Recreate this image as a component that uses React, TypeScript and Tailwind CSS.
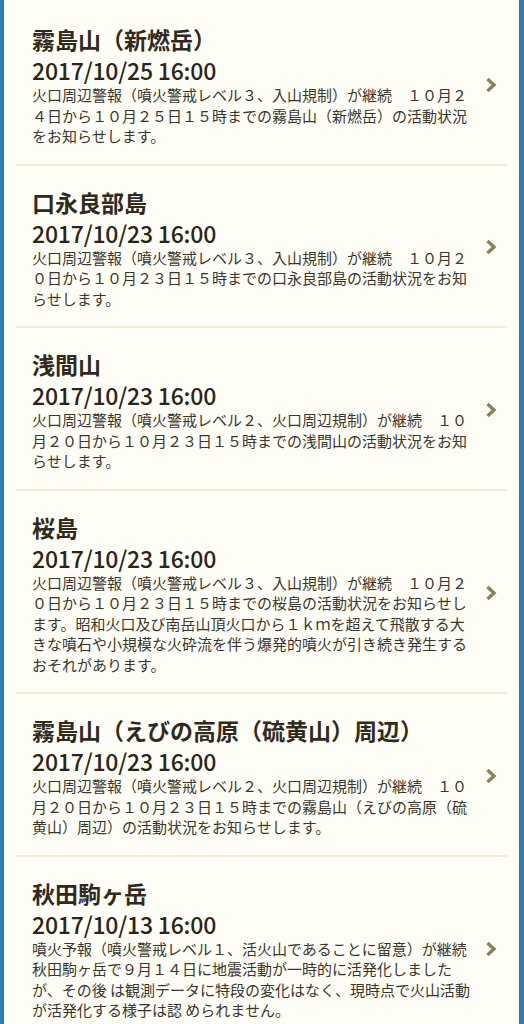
import React from "react";

type Item = { title: string; date: string; body: string };

const items: Item[] = [
  {
    title: "霧島山（新燃岳）",
    date: "2017/10/25 16:00",
    body: "火口周辺警報（噴火警戒レベル３、入山規制）が継続　１０月２４日から１０月２５日１５時までの霧島山（新燃岳）の活動状況をお知らせします。",
  },
  {
    title: "口永良部島",
    date: "2017/10/23 16:00",
    body: "火口周辺警報（噴火警戒レベル３、入山規制）が継続　１０月２０日から１０月２３日１５時までの口永良部島の活動状況をお知らせします。",
  },
  {
    title: "浅間山",
    date: "2017/10/23 16:00",
    body: "火口周辺警報（噴火警戒レベル２、火口周辺規制）が継続　１０月２０日から１０月２３日１５時までの浅間山の活動状況をお知らせします。",
  },
  {
    title: "桜島",
    date: "2017/10/23 16:00",
    body: "火口周辺警報（噴火警戒レベル３、入山規制）が継続　１０月２０日から１０月２３日１５時までの桜島の活動状況をお知らせします。昭和火口及び南岳山頂火口から１ｋｍを超えて飛散する大きな噴石や小規模な火砕流を伴う爆発的噴火が引き続き発生するおそれがあります。",
  },
  {
    title: "霧島山（えびの高原（硫黄山）周辺）",
    date: "2017/10/23 16:00",
    body: "火口周辺警報（噴火警戒レベル２、火口周辺規制）が継続　１０月２０日から１０月２３日１５時までの霧島山（えびの高原（硫黄山）周辺）の活動状況をお知らせします。",
  },
  {
    title: "秋田駒ヶ岳",
    date: "2017/10/13 16:00",
    body: "噴火予報（噴火警戒レベル１、活火山であることに留意）が継続秋田駒ヶ岳で９月１４日に地震活動が一時的に活発化しましたが、その後 は観測データに特段の変化はなく、現時点で火山活動が活発化する様子は認 められません。",
  },
];

function Chevron() {
  return (
    <svg width="13" height="16" viewBox="0 0 13 16" className="shrink-0">
      <path d="M2.5 2 L9 8 L2.5 14" fill="none" stroke="#8c8258" strokeWidth="3.4" strokeLinecap="butt" strokeLinejoin="miter" />
    </svg>
  );
}

export default function App() {
  return (
    <div
      className="min-h-screen bg-[#fffef6] border-l-4 border-r-[5px] border-[#2d7db8] pt-[3px]"
      style={{ fontFamily: '"Noto Sans CJK JP", "Noto Sans", sans-serif' }}
    >
      <div className="px-3">
        {items.map((it, i) => (
          <div key={i} className="flex items-center border-b-2 border-[#f2edd4] pl-4 pr-[9px] pt-5 pb-[17px]">
            <div className="w-[444px] shrink-0">
              <div className="text-[23px] leading-[32px] font-bold text-[#2f2a1c]">{it.title}</div>
              <div className="text-[23px] leading-[30px] font-medium text-[#2a2517] tracking-[-0.2px]">{it.date}</div>
              <div className="text-[15px] leading-[20.5px] text-[#3a362c]">{it.body}</div>
            </div>
            <div className="flex-1 flex justify-end">
              <Chevron />
            </div>
          </div>
        ))}
      </div>
    </div>
  );
}
